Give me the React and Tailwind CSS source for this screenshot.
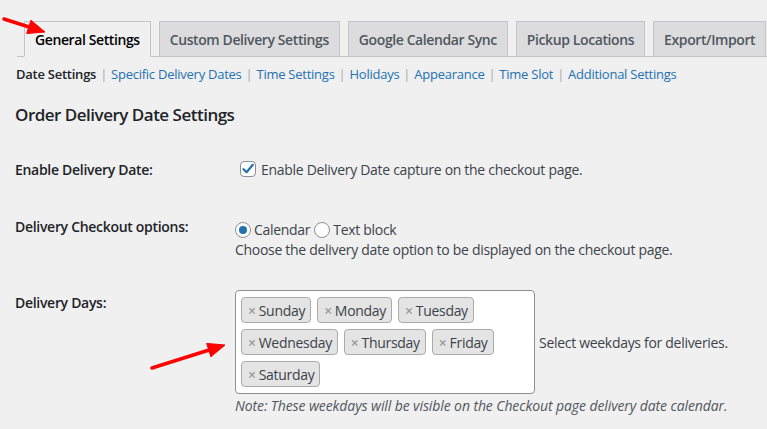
import React from 'react';

const TABS = ['General Settings', 'Custom Delivery Settings', 'Google Calendar Sync', 'Pickup Locations', 'Export/Import'];
const SUBNAV = ['Specific Delivery Dates', 'Time Settings', 'Holidays', 'Appearance', 'Time Slot', 'Additional Settings'];
const DAYS = ['Sunday', 'Monday', 'Tuesday', 'Wednesday', 'Thursday', 'Friday', 'Saturday'];

const Arrow = ({ x1, y1, x2, y2 }) => {
  // red annotation arrow, tip at x2,y2
  const dx = x2 - x1;
  const dy = y2 - y1;
  const len = Math.hypot(dx, dy);
  const ux = dx / len;
  const uy = dy / len;
  const bx = x2 - ux * 17;
  const by = y2 - uy * 17;
  const px = -uy * 7;
  const py = ux * 7;
  return (
    <g fill="#f00" stroke="#f00">
      <line x1={x1} y1={y1} x2={bx + ux * 2} y2={by + uy * 2} strokeWidth="3.5" strokeLinecap="round" />
      <polygon points={`${x2},${y2} ${bx + px},${by + py} ${bx - px},${by - py}`} strokeWidth="1" />
    </g>
  );
};

export default function App() {
  return (
    <div className="relative w-[767px] h-[429px] overflow-hidden bg-[#f0f0f1] text-[#3c434a] text-[14px]" style={{ fontFamily: '"Open Sans", "Noto Sans", sans-serif' }}>
      {/* tabs */}
      <div className="ml-[17px] pt-[21px] pl-[7px] flex gap-[8px] border-b border-[#c3c4c7] h-[57px]">
        {TABS.map((t, i) => (
          <div
            key={t}
            className={`h-[36px] px-[10px] border border-[#c3c4c7] flex items-center text-[14px] font-semibold tracking-[-0.4px] whitespace-nowrap ${
              i === 0 ? 'bg-[#f0f0f1] text-black border-b-[#f0f0f1] px-[9px]' : 'bg-[#dcdcde] text-[#50575e] h-[35px]'
            }`}
          >
            {t}
          </div>
        ))}
      </div>

      {/* sub navigation */}
      <div className="mt-[8px] ml-[16px] flex items-center leading-[18px] text-[13px] whitespace-nowrap tracking-[-0.25px]">
        <span className="font-semibold text-[#1d2327]">Date Settings</span>
        {SUBNAV.map((s) => (
          <React.Fragment key={s}>
            <span className="mx-[4px] text-[#a7aaad]">|</span>
            <span className="text-[#2271b1]">{s}</span>
          </React.Fragment>
        ))}
      </div>

      <h2 className="mt-[20px] ml-[15px] leading-[24px] text-[17px] font-semibold text-[#1d2327] tracking-[-0.5px]">Order Delivery Date Settings</h2>

      {/* enable delivery date */}
      <div className="mt-[33px] ml-[15px] flex leading-[20px]">
        <div className="w-[220px] shrink-0 font-semibold text-[#1d2327] tracking-[-0.3px]">Enable Delivery Date:</div>
        <div className="flex items-center tracking-[-0.3px]">
          <span className="ml-[5px] mr-[5px] w-[16px] h-[16px] bg-white border border-[#8c8f94] rounded-[4px] flex items-center justify-center -mt-[3px]">
            <svg width="14" height="14" viewBox="0 0 14 14">
              <path d="M2.5 7.2 L5.6 10.2 L11.8 2.8" fill="none" stroke="#2271b1" strokeWidth="2.2" strokeLinecap="round" strokeLinejoin="round" />
            </svg>
          </span>
          Enable Delivery Date capture on the checkout page.
        </div>
      </div>

      {/* checkout options */}
      <div className="mt-[37px] ml-[15px] flex leading-[20px]">
        <div className="w-[220px] shrink-0 font-semibold text-[#1d2327] tracking-[-0.3px]">Delivery Checkout options:</div>
        <div className="pt-[3px] tracking-[-0.3px]">
          <div className="flex items-center">
            <span className="w-[16px] h-[16px] rounded-full bg-white border border-[#8c8f94] flex items-center justify-center mr-[3px]">
              <span className="w-[8px] h-[8px] rounded-full bg-[#2271b1]" />
            </span>
            Calendar
            <span className="w-[16px] h-[16px] rounded-full bg-white border border-[#8c8f94] ml-[4px] mr-[3px]" />
            Text block
          </div>
          <div>Choose the delivery date option to be displayed on the checkout page.</div>
        </div>
      </div>

      {/* delivery days */}
      <div className="mt-[30px] ml-[15px] flex">
        <div className="w-[220px] shrink-0 pt-[3px] leading-[20px] font-semibold text-[#1d2327] tracking-[-0.3px]">Delivery Days:</div>
        <div>
          <div className="flex items-center">
            <div className="w-[300px] h-[104px] bg-white border border-[#8c8f94] rounded-[4px] pl-[5px] pt-[6px] pr-[20px] flex flex-wrap content-start gap-x-[6px] gap-y-[6px]">
              {DAYS.map((d) => (
                <span key={d} className="h-[26px] pl-[6px] pr-[5px] flex items-center bg-[#e4e4e4] border border-[#aaa] rounded-[4px] tracking-[-0.3px] text-[#3c434a]">
                  <span className="text-[#999] text-[14px] mr-[3px] font-semibold">×</span>
                  {d}
                </span>
              ))}
            </div>
            <span className="ml-[4px] tracking-[-0.3px]">Select weekdays for deliveries.</span>
          </div>
          <div className="mt-[2px] leading-[20px] italic text-[14px] tracking-[-0.1px] text-[#50575e]">Note: These weekdays will be visible on the Checkout page delivery date calendar.</div>
        </div>
      </div>

      {/* annotation arrows */}
      <svg className="absolute inset-0 pointer-events-none" width="767" height="429">
        <Arrow x1={4} y1={19} x2={45} y2={32} />
        <Arrow x1={152} y1={368} x2={225} y2={345} />
      </svg>
    </div>
  );
}
